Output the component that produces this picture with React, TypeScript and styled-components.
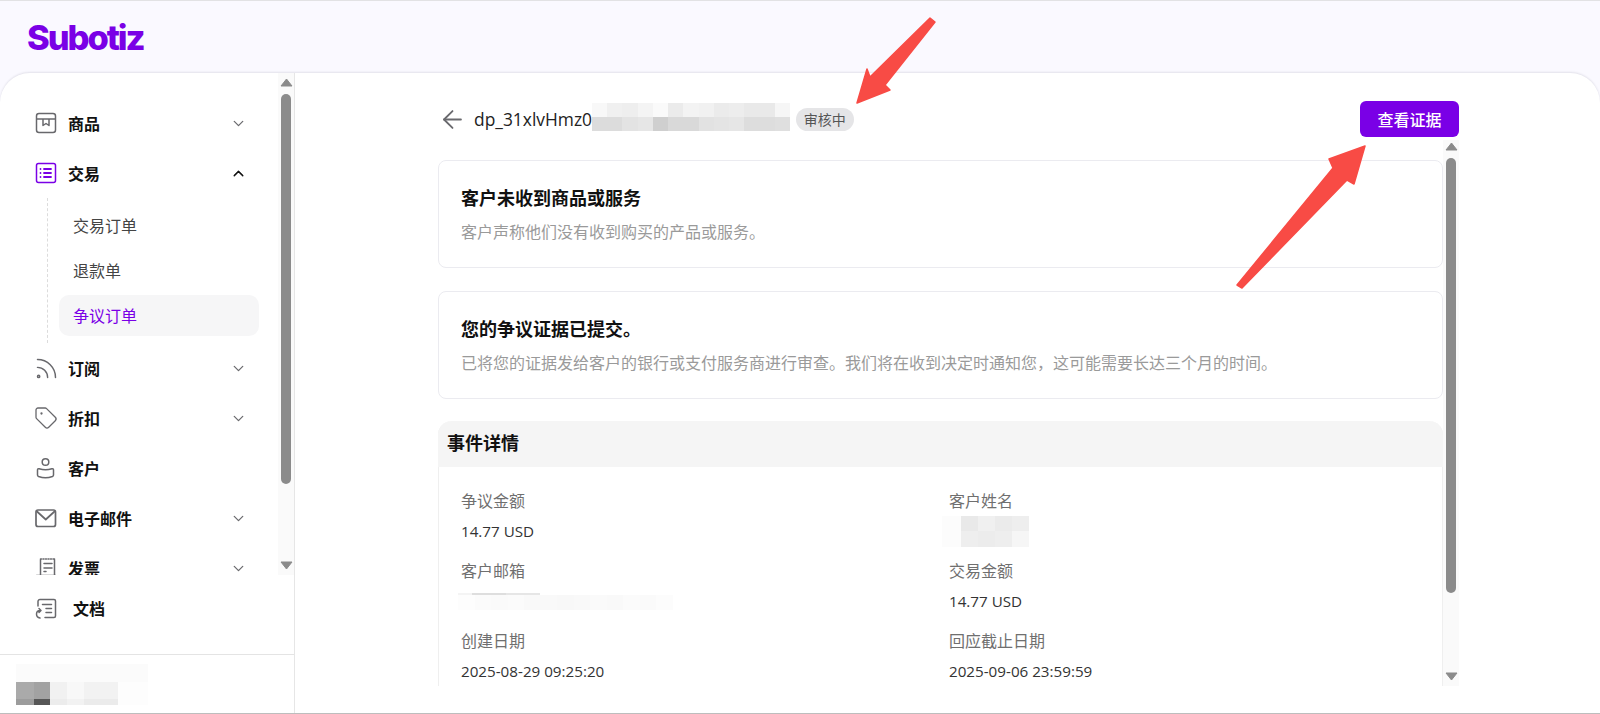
import React from "react";
import styled, { createGlobalStyle } from "styled-components";
import { ArrowLeft, ChevronDown, ChevronUp, Rss, Tag } from "lucide-react";

const Global = createGlobalStyle`
  html, body { margin: 0; padding: 0; height: 100%; overflow: hidden; background: #fff; }
  body { font-family: "Open Sans", "Noto Sans CJK SC", sans-serif; color: #111; }
  * { box-sizing: border-box; }
`;

const Page = styled.div`
  position: relative;
  width: 1600px;
  height: 714px;
  display: flex;
  flex-direction: column;
  background: #faf9ff;
  border-top: 1px solid #e2e2e4;
  overflow: hidden;
`;
const Header = styled.header`
  height: 72px;
  flex: none;
  display: flex;
  align-items: center;
  padding: 0 0 0 27px;
`;
const Logo = styled.div`
  font-family: Inter, sans-serif;
  font-size: 34.5px;
  font-weight: 800;
  letter-spacing: -2.1px;
  color: #7a00e6;
  line-height: 1;
  margin-top: 2px;
`;
const Panel = styled.div`
  flex: 1;
  min-height: 0;
  display: flex;
  background: #fff;
  border-radius: 30px 30px 0 0;
  border-bottom: 1px solid #bdbdbd;
  box-shadow: 0 -1px 2px rgba(60, 60, 80, 0.12);
  overflow: hidden;
`;
const Sidebar = styled.aside`
  width: 295px;
  flex: none;
  display: flex;
  flex-direction: column;
  border-right: 1px solid #e6e6e6;
`;
const NavArea = styled.div`
  height: 502px;
  flex: none;
  display: flex;
`;
const Nav = styled.nav`
  flex: 1;
  min-width: 0;
  overflow: hidden;
  padding: 25px 0 0 36px;
`;
const Track = styled.div<{ $top: number }>`
  width: 16px;
  flex: none;
  display: flex;
  flex-direction: column;
  align-items: center;
  background: #fafafa;
  padding-top: ${(p) => p.$top}px;
`;
const Thumb = styled.div<{ $h: number }>`
  width: 10px;
  height: ${(p) => p.$h}px;
  border-radius: 5px;
  background: #8b8b8b;
  margin: 2px 0 auto;
`;
const ArrowBox = styled.svg`
  display: block;
  flex: none;
  margin-bottom: 5px;
`;
const ScrollArrow = ({ down }: { down?: boolean }) => (
  <ArrowBox width="13" height="9" viewBox="0 0 13 9">
    <path
      d={down ? "M1 1h11L6.5 8z" : "M1 8h11L6.5 1z"}
      fill="#8b8b8b"
      stroke="#8b8b8b"
      strokeWidth="1"
      strokeLinejoin="round"
    />
  </ArrowBox>
);

const Item = styled.div<{ $gap?: number }>`
  height: 50px;
  width: 211px;
  display: flex;
  align-items: center;
  gap: ${(p) => p.$gap ?? 12}px;
  flex: none;
`;
const IconSlot = styled.span<{ $color?: string }>`
  width: 20px;
  height: 20px;
  flex: none;
  display: flex;
  align-items: center;
  justify-content: center;
  color: ${(p) => p.$color ?? "#68686c"};
  svg { flex: none; }
`;
const ItemLabel = styled.span`
  flex: 1;
  font-size: 16px;
  font-weight: 700;
  color: #111;
`;
const Chev = styled.span<{ $dark?: boolean }>`
  display: flex;
  color: ${(p) => (p.$dark ? "#111" : "#6a6a6e")};
`;
const SubList = styled.div`
  width: 212px;
  margin-left: 11px;
  height: 145px;
  padding: 7px 0 0 11px;
  border-left: 1px dashed #dcdcdc;
  display: flex;
  flex-direction: column;
  gap: 4px;
`;
const SubItem = styled.div<{ $active?: boolean }>`
  height: 41px;
  width: 200px;
  flex: none;
  display: flex;
  align-items: center;
  padding: 0 0 2px 14px;
  border-radius: 10px;
  font-size: 16px;
  color: ${(p) => (p.$active ? "#7a00e6" : "#444")};
  background: ${(p) => (p.$active ? "#f6f6f7" : "transparent")};
`;
const DocRow = styled.div`
  flex: none;
  padding: 8px 0 0 36px;
  height: 79px;
`;
const Footer = styled.div`
  flex: 1;
  border-top: 1px solid #e4e4e4;
  padding: 9px 0 0 16px;
`;
const Mosaic = styled.div<{ $shift?: number; $lift?: number }>`
  display: flex;
  flex-direction: column;
  flex: none;
  margin-left: ${(p) => p.$shift ?? 0}px;
  margin-bottom: ${(p) => p.$lift ?? 0}px;
`;
const MosaicRow = styled.div<{ $h: number }>`
  display: flex;
  height: ${(p) => p.$h}px;
`;
const Cell = styled.div<{ $w: number; $c: string }>`
  width: ${(p) => p.$w}px;
  flex: none;
  background: ${(p) => p.$c};
`;
type Rows = { h: number; cells: [number, string][] }[];
const Blur = ({ rows, shift, lift }: { rows: Rows; shift?: number; lift?: number }) => (
  <Mosaic $shift={shift} $lift={lift}>
    {rows.map((r, i) => (
      <MosaicRow key={i} $h={r.h}>
        {r.cells.map(([w, c], j) => (
          <Cell key={j} $w={w} $c={c} />
        ))}
      </MosaicRow>
    ))}
  </Mosaic>
);
const even = (w: number, cs: string[]): [number, string][] => cs.map((c) => [w, c]);

const footerBlur: Rows = [
  { h: 18, cells: [[132, "#fbfbfb"]] },
  { h: 17, cells: [[18, "#aaaaaa"], [16, "#a2a2a2"], [17, "#f1f1f1"], [17, "#f8f8f8"], [34, "#f2f2f2"], [30, "#fdfdfd"]] },
  { h: 6, cells: [[18, "#9c9c9c"], [16, "#565656"], [17, "#ececec"], [17, "#f2f2f2"], [34, "#ebebeb"], [30, "#fdfdfd"]] },
];
const titleBlur: Rows = [
  { h: 14, cells: even(15.23, ["#f8f8f8", "#f0f0f0", "#eeeeee", "#f4f4f4", "#fafafa", "#ebebeb", "#f3f3f3", "#f1f1f1", "#ebebeb", "#ededed", "#e9e9e9", "#e9e9e9", "#f6f6f6"]) },
  { h: 14, cells: even(15.23, ["#dcdcdc", "#dcdcdc", "#e3e3e3", "#e6e6e6", "#cfcfcf", "#d9d9d9", "#d9d9d9", "#e2e2e2", "#e4e4e4", "#e6e6e6", "#dddddd", "#dddddd", "#dfdfdf"]) },
];
const emailBlur: Rows = [
  { h: 2, cells: [[14, "#f4f4f4"], [34, "#dedede"], [34, "#e6e6e6"]] },
  { h: 15, cells: even(16.5, ["#fdfdfd", "#fbfbfb", "#fafafa", "#fbfbfb", "#f9f9f9", "#f9f9f9", "#f8f8f8", "#f9f9f9", "#fafafa", "#f9f9f9", "#fbfbfb", "#fafafa", "#fcfcfc"]) },
];
const nameBlur: Rows = [
  { h: 15, cells: [[19, "#fcfcfc"], [17, "#e9e9e9"], [17, "#f0f0f0"], [17, "#ebebeb"], [17, "#eeeeee"]] },
  { h: 16, cells: [[19, "#fcfcfc"], [17, "#eeeeee"], [17, "#ececec"], [17, "#eeeeee"], [17, "#f6f6f6"]] },
];

const Ic = ({ children, color }: { children: React.ReactNode; color?: string }) => (
  <IconSlot $color={color}>
    <svg width="22" height="22" viewBox="0 0 22 22" fill="none" stroke="currentColor" strokeWidth="1.5" strokeLinecap="round" strokeLinejoin="round">
      {children}
    </svg>
  </IconSlot>
);

const icons = {
  box: (
    <Ic>
      <rect x="1.5" y="1.500" width="19" height="19" rx="2.500" />
      <path d="M2 7h18M8 7v6.500l3-2 3 2V7" />
    </Ic>
  ),
  list: (
    <Ic color="#7a00e6">
      <rect x="1.500" y="1.500" width="19" height="19" rx="2" />
      <path d="M9 7h7M9 11h7M9 15h7M5.500 7h.01M5.500 11h.01M5.500 15h.01" strokeWidth="1.8" />
    </Ic>
  ),
  rss: (
    <IconSlot>
      <Rss size={27} strokeWidth={1.3} />
    </IconSlot>
  ),
  tag: (
    <IconSlot>
      <Tag size={24} strokeWidth={1.3} />
    </IconSlot>
  ),
  user: (
    <Ic>
      <circle cx="10.500" cy="5" r="3.300" />
      <path d="M2.500 13c0-.9.7-1.500 1.600-1.200 4.200 1.300 8.600 1.300 12.800 0 .9-.3 1.600.3 1.600 1.200v5c0 .7-.5 1.200-1.100 1.500-4.200 1.600-9.600 1.600-13.800 0C3 19.200 2.500 18.700 2.500 18z" />
    </Ic>
  ),
  mail: (
    <Ic>
      <rect x="1" y="3" width="19.500" height="16.500" rx="2" strokeWidth="1.700" />
      <path d="M2 4.500l8.750 8 8.750-8" strokeWidth="1.700" />
    </Ic>
  ),
  invoice: (
    <Ic>
      <path d="M5.500 18V2.500M5.500 2h1M8 2h1M10.500 2h1M13 2h1M15.500 2h1M18 2h1.500M19.500 2.500V18M1.500 18.500h19M9 6.500h8M9 11h8M9 14.500h2" />
    </Ic>
  ),
  doc: (
    <Ic>
      <path d="M3 9V4.500C3 3.200 3.900 2.500 5 2.500h14c.8 0 1.500.7 1.500 1.500v15c0 .8-.7 1.500-1.500 1.500H10" />
      <path d="M7.500 7.500h9M11 11.500h5.500M11 15.500h5.500" />
      <path d="M5 21C3 20.600 1.500 19 1.500 17c0-2 1.500-3.500 4-3.500M4 11.500l2 2-2 2" />
    </Ic>
  ),
};

const NavItem = ({ icon, label, open, noChev }: { icon: React.ReactNode; label: string; open?: boolean; noChev?: boolean }) => (
  <Item>
    {icon}
    <ItemLabel>{label}</ItemLabel>
    {!noChev && (
      <Chev $dark={open}>
        {open ? <ChevronUp size={17} strokeWidth={2} /> : <ChevronDown size={17} strokeWidth={1.8} />}
      </Chev>
    )}
  </Item>
);

const Main = styled.main`
  flex: 1;
  min-width: 0;
  padding: 28px 0 0 143px;
`;
const Column = styled.div`
  width: 1021px;
  display: flex;
  flex-direction: column;
`;
const TitleRow = styled.div`
  height: 36px;
  display: flex;
  align-items: center;
  padding-left: 3px;
`;
const Back = styled.span`
  width: 22px;
  display: flex;
  justify-content: center;
  color: #6a6a6e;
  margin-right: 11px;
  svg { flex: none; }
`;
const TitleText = styled.span`
  font-size: 17.4px;
  font-weight: 400;
  color: #222;
`;
const Badge = styled.span`
  margin-left: 6px;
  height: 23px;
  padding: 0 8px;
  display: flex;
  align-items: center;
  border-radius: 12px;
  background: #e5e5e7;
  color: #555;
  font-size: 14px;
`;
const Action = styled.button`
  margin-left: auto;
  width: 99px;
  height: 36px;
  border: 0;
  border-radius: 6px;
  background: #7a00e6;
  color: #fff;
  font-family: inherit;
  font-size: 16px;
  font-weight: 500;
  padding: 0;
`;
const ScrollRow = styled.div`
  margin-top: 3px;
  height: 546px;
  display: flex;
`;
const Content = styled.div`
  flex: 1;
  min-width: 0;
  overflow: hidden;
  padding-top: 20px;
`;
const Card = styled.section`
  height: 108px;
  margin-bottom: 23px;
  padding: 23px 22px 0;
  border: 1px solid #ebebf0;
  border-radius: 8px;
`;
const CardTitle = styled.h2`
  margin: 0;
  font-size: 18px;
  line-height: 28px;
  font-weight: 700;
  color: #111;
`;
const CardText = styled.p`
  margin: 6px 0 0;
  font-size: 16px;
  line-height: 28px;
  color: #9a9a9a;
`;
const Details = styled.section`
  margin-top: -1px;
  border-left: 1px solid #efefef;
  border-right: 1px solid #efefef;
  border-radius: 14px 14px 0 0;
`;
const DetailsHead = styled.div`
  height: 46px;
  margin: 0 -1px;
  display: flex;
  align-items: center;
  padding: 0 0 5px 9px;
  background: #f5f5f5;
  border-radius: 14px 14px 0 0;
  font-size: 18px;
  font-weight: 700;
  color: #111;
`;
const Grid = styled.div`
  display: grid;
  grid-template-columns: 488px 488px;
  row-gap: 10px;
  padding: 19px 0 0 22px;
`;
const Field = styled.div`
  height: 60px;
  display: flex;
  flex-direction: column;
`;
const Label = styled.div`
  height: 30px;
  line-height: 30px;
  font-size: 16px;
  color: #6f6f6f;
`;
const Value = styled.div`
  height: 30px;
  display: flex;
  align-items: center;
  font-size: 15.2px;
  color: #333;
`;
const Overlay = styled.svg`
  position: absolute;
  inset: 0;
  pointer-events: none;
`;

export default function App() {
  return (
    <>
      <Global />
      <Page>
        <Header>
          <Logo>Subotiz</Logo>
        </Header>
        <Panel>
          <Sidebar>
            <NavArea>
              <Nav>
                <NavItem icon={icons.box} label="商品" />
                <NavItem icon={icons.list} label="交易" open />
                <SubList>
                  <SubItem>交易订单</SubItem>
                  <SubItem>退款单</SubItem>
                  <SubItem $active>争议订单</SubItem>
                </SubList>
                <NavItem icon={icons.rss} label="订阅" />
                <NavItem icon={icons.tag} label="折扣" />
                <NavItem icon={icons.user} label="客户" noChev />
                <NavItem icon={icons.mail} label="电子邮件" />
                <NavItem icon={icons.invoice} label="发票" />
              </Nav>
              <Track $top={5}>
                <ScrollArrow />
                <Thumb $h={390} />
                <ScrollArrow down />
              </Track>
            </NavArea>
            <DocRow>
              <Item $gap={17}>
                {icons.doc}
                <ItemLabel>文档</ItemLabel>
              </Item>
            </DocRow>
            <Footer>
              <Blur rows={footerBlur} />
            </Footer>
          </Sidebar>
          <Main>
            <Column>
              <TitleRow>
                <Back>
                  <ArrowLeft size={29} strokeWidth={1.5} />
                </Back>
                <TitleText>dp_31xlvHmz0</TitleText>
                <Blur rows={titleBlur} lift={4} />
                <Badge>审核中</Badge>
                <Action>查看证据</Action>
              </TitleRow>
              <ScrollRow>
                <Content>
                  <Card>
                    <CardTitle>客户未收到商品或服务</CardTitle>
                    <CardText>客户声称他们没有收到购买的产品或服务。</CardText>
                  </Card>
                  <Card>
                    <CardTitle>您的争议证据已提交。</CardTitle>
                    <CardText>已将您的证据发给客户的银行或支付服务商进行审查。我们将在收到决定时通知您，这可能需要长达三个月的时间。</CardText>
                  </Card>
                  <Details>
                    <DetailsHead>事件详情</DetailsHead>
                    <Grid>
                      <Field>
                        <Label>争议金额</Label>
                        <Value>14.77 USD</Value>
                      </Field>
                      <Field>
                        <Label>客户姓名</Label>
                        <Value>
                          <Blur rows={nameBlur} shift={-7} />
                        </Value>
                      </Field>
                      <Field>
                        <Label>客户邮箱</Label>
                        <Value>
                          <Blur rows={emailBlur} shift={-3} />
                        </Value>
                      </Field>
                      <Field>
                        <Label>交易金额</Label>
                        <Value>14.77 USD</Value>
                      </Field>
                      <Field>
                        <Label>创建日期</Label>
                        <Value>2025-08-29 09:25:20</Value>
                      </Field>
                      <Field>
                        <Label>回应截止日期</Label>
                        <Value>2025-09-06 23:59:59</Value>
                      </Field>
                    </Grid>
                  </Details>
                </Content>
                <Track $top={2}>
                  <ScrollArrow />
                  <Thumb $h={435} />
                  <ScrollArrow down />
                </Track>
              </ScrollRow>
            </Column>
          </Main>
        </Panel>
        <Overlay width="1600" height="714" viewBox="0 1 1600 714">
          <path
            d="M930 18L935 22 885 85 890 90 857 103 867 69 870 77z"
            fill="#f84b45"
            stroke="#f84b45"
            strokeWidth="1.500"
            strokeLinejoin="round"
          />
          <path
            d="M1365 146L1329 159 1333 168 1237 285 1242 288 1347 180 1354 184z"
            fill="#f84b45"
            stroke="#f84b45"
            strokeWidth="1.500"
            strokeLinejoin="round"
          />
        </Overlay>
      </Page>
    </>
  );
}
